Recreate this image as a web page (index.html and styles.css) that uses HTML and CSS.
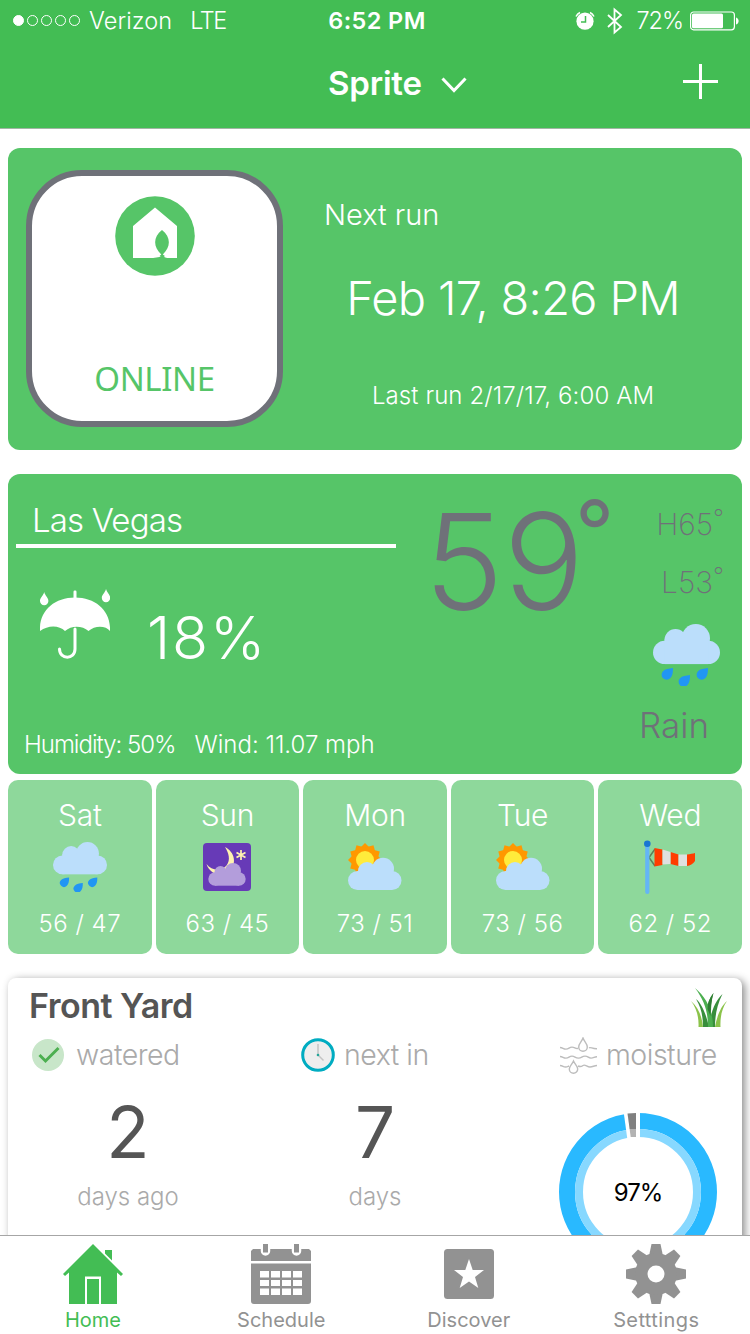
FILE: index.html
```html
<!DOCTYPE html>
<html lang="en">
<head>
    <meta charset="UTF-8">
    <meta name="viewport" content="width=device-width, initial-scale=1.0">
    <title>Sprite</title>
    <link rel="stylesheet" href="styles.css">
</head>
<body>
    <!-- Shared icons -->
    <svg class="defs" width="0" height="0">
        <symbol id="rain" viewBox="0 0 67 62">
            <g fill="#bbdefb">
                <circle cx="11.7" cy="28.4" r="11.7"/>
                <circle cx="55.3" cy="28.4" r="11.7"/>
                <circle cx="22.5" cy="16" r="11"/>
                <circle cx="42.8" cy="14.3" r="14.2"/>
                <rect x="11.7" y="15" width="43.6" height="25.1"/>
            </g>
            <g fill="#2196f3">
                <path id="drop" d="M20 44c0 5-.6 8-2.8 10.2a5 5 0 0 1-7.2-7C12 45 16 44.600 20 44z"/>
                <use href="#drop" x="17" y="7"/>
                <use href="#drop" x="35"/>
            </g>
        </symbol>
        <symbol id="partly" viewBox="0 0 54 48">
            <g fill="#ff9800">
                <path id="rays" d="M17 0l17 17-17 17L0 17z"/>
                <use href="#rays" transform="rotate(30 17 17)"/>
                <use href="#rays" transform="rotate(60 17 17)"/>
            </g>
            <circle cx="17" cy="17" r="9" fill="#ffeb3b"/>
            <g fill="#bbdefb">
                <circle cx="9.500" cy="37.500" r="9.500"/>
                <circle cx="44" cy="37.500" r="9.500"/>
                <circle cx="19" cy="28" r="9"/>
                <circle cx="35" cy="25.700" r="11"/>
                <rect x="9.500" y="28" width="34.500" height="19"/>
            </g>
        </symbol>
    </svg>

    <header class="header">
        <div class="status-bar">
            <div class="carrier">
                <span class="signal"><i class="on"></i><i></i><i></i><i></i><i></i></span>
                <span class="carrier-name">Verizon</span>
                <span class="network">LTE</span>
            </div>
            <div class="time">6:52 PM</div>
            <div class="device">
                <svg class="alarm" width="20" height="20" viewBox="0 0 20 20">
                    <circle cx="10" cy="10.200" r="8.600" fill="#fff"/>
                    <path d="M1 5.500A9 9 0 0 1 5 1.500M19 5.500A9 9 0 0 0 15 1.500" fill="none" stroke="#fff" stroke-width="1.500"/>
                    <path d="M10.500 5v6H6" fill="none" stroke="#43bd54" stroke-width="1.500"/>
                </svg>
                <svg class="bluetooth" width="16" height="28" viewBox="0 0 16 28">
                    <path d="M1 8l13 12-6.500 5.500V2.500L14 8 1 20" fill="none" stroke="#fff" stroke-width="1.800"/>
                </svg>
                <span class="percent">72%</span>
                <svg width="49" height="20" viewBox="0 0 49 20">
                    <rect x=".6" y="1" width="43.800" height="17.800" rx="3" fill="none" stroke="#fff" stroke-width="1.200"/>
                    <rect x="2" y="2.500" width="31" height="14.800" rx="1.500" fill="#fff"/>
                    <path d="M46 6.500c3.500 1 3.500 6 0 7z" fill="#fff"/>
                </svg>
            </div>
        </div>
        <div class="nav">
            <h1 class="title">Sprite</h1>
            <svg class="chevron" width="26" height="16" viewBox="0 0 26 16">
                <path d="M1.500 1.500L13 13.500 24.500 1.500" fill="none" stroke="#fff" stroke-width="3"/>
            </svg>
            <svg class="plus" width="35" height="35" viewBox="0 0 35 35">
                <path d="M17.500 0v35M0 17.500h35" stroke="#fff" stroke-width="3"/>
            </svg>
        </div>
    </header>

    <main class="content">
        <!-- Controller status -->
        <section class="card status-card">
            <div class="tile">
                <svg width="80" height="80" viewBox="0 0 80 80">
                    <circle cx="40" cy="40" r="39.800" fill="#56c568"/>
                    <path fill="#fff" d="M40 11.500L62 30v32H52.500c-2-.3-3.500-1-5-2-4 1.500-8 2-13 2H18V30z"/>
                    <path fill="#56c568" d="M47 34c9 7 9 17 .8 24.500l2.200 1.500-2.500 2-3-2 1.800-1.500C38 51 38 41 47 34z"/>
                </svg>
                <span class="tile-label">ONLINE</span>
            </div>
            <div class="run">
                <div class="next-label">Next run</div>
                <div class="next-time">Feb 17, 8:26 PM</div>
                <div class="last-run">Last run 2/17/17, 6:00 AM</div>
            </div>
        </section>

        <!-- Current weather -->
        <section class="card weather-card">
            <div class="weather-left">
                <div class="city">Las Vegas</div>
                <div class="chance">
                    <svg width="70" height="71" viewBox="0 0 70 71">
                        <g fill="#fff">
                            <path d="M0 42C-1 22 14 8.500 35 8.500S71 22 70 42c-4-5.500-15-6-21.500 0-6-5.500-17-6-23.500 0-6-6-17-6-25 0z"/>
                            <rect x="33.500" y="1.500" width="3" height="9" rx="1.200"/>
                            <path d="M4.200 3c1 4 4.200 5.500 4.200 9a4.200 4.200 0 0 1-8.400 0C0 8.500 3.200 7 4.200 3zM66 0c1 4 4.200 5.500 4.200 9a4.200 4.200 0 0 1-8.400 0C61.800 5.500 65 4 66 0z"/>
                        </g>
                        <path d="M35 40v20c0 11-15.500 11-15.500 0" fill="none" stroke="#fff" stroke-width="3" stroke-linecap="round"/>
                    </svg>
                    <span class="chance-value">18%</span>
                </div>
                <div class="details"><span class="humidity">Humidity: 50%</span><span>Wind: 11.07 mph</span></div>
            </div>
            <div class="temp"><span class="temp-value">59</span><span class="temp-degree">°</span></div>
            <div class="weather-right">
                <div class="high">H65<sup>°</sup></div>
                <div class="low">L53<sup>°</sup></div>
                <svg class="now-icon" width="67" height="62"><use href="#rain"/></svg>
                <div class="condition">Rain</div>
            </div>
        </section>

        <!-- Forecast -->
        <section class="forecast">
            <div class="day">
                <div class="day-name">Sat</div>
                <svg width="54" height="50"><use href="#rain"/></svg>
                <div class="day-temp">56 / 47</div>
            </div>
            <div class="day">
                <div class="day-name">Sun</div>
                <svg width="48" height="48" viewBox="0 0 48 48">
                    <rect width="48" height="48" rx="4" fill="#673ab7"/>
                    <path fill="#fff3b0" d="M22 4c10 5 12 17 4.500 24C19 34 7 32 3.500 21c5 7 15 7.500 20 1.500 4.500-5.500 2-13-1.500-18.500z"/>
                    <path fill="none" stroke="#fff3b0" stroke-width="1.700" d="M38 7v10M33.500 9.500l9 5M42.500 9.500l-9 5"/>
                    <g fill="#b39ddb">
                        <circle cx="12" cy="36" r="6.700"/>
                        <circle cx="36" cy="36" r="6.700"/>
                        <circle cx="17.500" cy="29" r="6"/>
                        <circle cx="30" cy="28" r="8"/>
                        <rect x="12" y="29" width="24" height="13.700"/>
                    </g>
                </svg>
                <div class="day-temp">63 / 45</div>
            </div>
            <div class="day">
                <div class="day-name">Mon</div>
                <svg width="54" height="48"><use href="#partly"/></svg>
                <div class="day-temp">73 / 51</div>
            </div>
            <div class="day">
                <div class="day-name">Tue</div>
                <svg width="54" height="48"><use href="#partly"/></svg>
                <div class="day-temp">73 / 56</div>
            </div>
            <div class="day">
                <div class="day-name">Wed</div>
                <svg width="52" height="54" viewBox="0 0 52 54">
                    <path d="M11 9l-6 8.500 6 8.500" fill="none" stroke="#5d7f5a" stroke-width="1.500"/>
                    <rect x="1.200" y="4" width="4.200" height="50" rx="2" fill="#64b5f6"/>
                    <circle cx="3.300" cy="3.700" r="3.300" fill="#1976d2"/>
                    <path fill="#ff3d00" d="M10.500 8l8 1.500V25l-8 1.500zM26.500 12l8 2.500V26l-8-2zM43 14.500c3-.2 6-1 8-1.500v8c-2 3-5 4.500-8 5z"/>
                    <path fill="#e0e0e0" d="M18.500 9.500l8 2.500v12l-8 .5zM34.500 14.500H43V26h-8.500z"/>
                </svg>
                <div class="day-temp">62 / 52</div>
            </div>
        </section>

        <!-- Zone -->
        <section class="zone">
            <div class="zone-head">
                <h2 class="zone-name">Front Yard</h2>
                <svg width="36" height="40" viewBox="0 0 36 40">
                    <path fill="#8bc34a" d="M0 13c7 6 11 15 12 26H7.500C8 29 5.500 20 0 13zM36 13c-6 5-10 15-12 26h5.500C29 29 31 20 36 13z"/>
                    <path fill="#388e3c" d="M5 11c6 5 10 15 13 28h-6C12 28 10 19 5 11zM31.500 6C25 12 20 22 18 39h6c0-12 2-22 7.500-33zM22.500 5C17 12 15 19 17 27l3 2c0-8 0-15 2.500-24z"/>
                    <path fill="#4caf50" d="M4 0c11 9 18 22 18 39h-5C17 23 13 12 4 0z"/>
                    <path fill="#2e7d32" d="M22.500 5c-4 5-6 10-6 16l3 7c0-8 .5-15 3-23z"/>
                </svg>
            </div>
            <div class="stats">
                <div class="stat watered">
                    <div class="stat-label">
                        <svg width="32" height="32" viewBox="0 0 32 32">
                            <circle cx="16" cy="16" r="16" fill="#c8e6c9"/>
                            <path d="M7.500 16l6 6L26.500 9" fill="none" stroke="#4caf50" stroke-width="3"/>
                        </svg>
                        <span>watered</span>
                    </div>
                    <div class="stat-value">2</div>
                    <div class="stat-unit">days ago</div>
                </div>
                <div class="stat next">
                    <div class="stat-label">
                        <svg width="34" height="34" viewBox="0 0 34 34">
                            <circle cx="17" cy="17" r="15.300" fill="#eee" stroke="#00acc1" stroke-width="3"/>
                            <path d="M17 6v11l5.500 5.500" fill="none" stroke="#c4c4c4" stroke-width="1.500"/>
                            <circle cx="17" cy="17" r="1.300" fill="#26a69a"/>
                        </svg>
                        <span>next in</span>
                    </div>
                    <div class="stat-value">7</div>
                    <div class="stat-unit">days</div>
                </div>
                <div class="stat moisture">
                    <div class="stat-label">
                        <svg width="37" height="37" viewBox="0 0 37 37" fill="none" stroke="#bdbdbd" stroke-width="1.400">
                            <path d="M23 1c1.500 4 4.300 5.500 4.300 9a4.300 4.300 0 0 1-8.600 0C18.700 6.500 21.500 5 23 1z"/>
                            <path d="M13.500 24c1.500 3.500 4.200 5 4.200 8a4.200 4.200 0 0 1-8.400 0c0-3 2.700-4.500 4.200-8z"/>
                            <path d="M0 10.500c3 0 3 1.600 6 1.600s3-2 6-2 3 1.800 6 1.300M29 10.800c2-1 3 1.200 8 1M0 19.500c3 0 3 1.600 6 1.600s3-2 6-2 3 2 6.500 2 3-2 6.500-2 3 2 6 2 3-1.300 6-1.300M0 28.500c3 0 3 1.500 5.500 1.500s2-.6 3.500-1M18 29c2 1 3 1 5-.5s4 1.500 7 1.500 4-1.500 7-1.500"/>
                        </svg>
                        <span>moisture</span>
                    </div>
                    <svg class="donut" width="158" height="158" viewBox="0 0 158 158">
                        <circle cx="79" cy="79" r="71" fill="none" stroke="#29b9ff" stroke-width="16"/>
                        <circle cx="79" cy="79" r="59" fill="none" stroke="#87d8ff" stroke-width="8"/>
                        <path fill="#fff" d="M64.800 0H81v25H68.200z"/>
                        <path fill="#808080" d="M68.500.6Q73 0 77 0v16h-6.400z"/>
                        <path fill="#b3b3b3" d="M70.600 16H77v8h-5.300z"/>
                        <text class="donut-label" x="79" y="88" text-anchor="middle">97%</text>
                    </svg>
                </div>
            </div>
        </section>
    </main>

    <nav class="tabs">
        <a class="tab active">
            <svg width="60" height="60" viewBox="0 0 60 60" fill="currentColor">
                <path d="M30 0l30 30-2 2-4-3.500V60H38V32.500H22V60H6V28.500L2 32l-2-2z"/>
                <path d="M24 35h12v25H24zM42 6h7v10.500l-7-7z"/>
            </svg>
            <span>Home</span>
        </a>
        <a class="tab">
            <svg width="60" height="60" viewBox="0 0 60 60">
                <path fill="currentColor" d="M2 5h56l2 2v10H0V7zM0 19.500h60V57a3 3 0 0 1-3 3H3a3 3 0 0 1-3-3z"/>
                <path d="M14.500 2v5M45.500 2v5" stroke="#fff" stroke-width="9.500" stroke-linecap="round"/>
                <path fill="#fff" d="M9 0h11v4H9zM40 0h11v4H40z"/>
                <path d="M14.500 0v8.500M45.500 0v8.500" stroke="currentColor" stroke-width="5"/>
                <path fill="#fff" d="M9 27h9v6.500H9zM20 27h9v6.500h-9zM31 27h9v6.500h-9zM42 27h9v6.500h-9zM9 36h9v6H9zM20 36h9v6h-9zM31 36h9v6h-9zM42 36h9v6h-9zM9 44.500h9V51H9zM20 44.500h9V51h-9zM31 44.500h9V51h-9zM42 44.500h9V51h-9z"/>
            </svg>
            <span>Schedule</span>
        </a>
        <a class="tab">
            <svg width="60" height="60" viewBox="0 0 60 60">
                <rect x="5" y="5" width="50" height="50" rx="3.500" fill="currentColor"/>
                <path fill="#fff" d="M30 15l3.700 11H45l-9 7 3.300 11L30 37.500 20.700 44 24 33l-9-7h11.300z"/>
            </svg>
            <span>Discover</span>
        </a>
        <a class="tab settings">
            <svg width="60" height="60" viewBox="-30 -30 60 60">
                <g fill="currentColor">
                    <path id="tooth" d="M-7-18L-4.500-30h9L7-18v36L4.500 30h-9L-7 18z"/>
                    <use href="#tooth" transform="rotate(45)"/>
                    <use href="#tooth" transform="rotate(90)"/>
                    <use href="#tooth" transform="rotate(135)"/>
                    <circle r="21"/>
                </g>
                <circle r="8.500" fill="#fff"/>
            </svg>
            <span>Setttings</span>
        </a>
    </nav>
</body>
</html>
```

FILE: styles.css
```css
* {
    box-sizing: border-box;
}
body {
    margin: 0;
    height: 1334px;
    display: flex;
    flex-direction: column;
    overflow: hidden;
    background: #fff;
    color: #fff;
    font-family: Inter, Roboto, "Liberation Sans", sans-serif;
    font-weight: 300;
    white-space: nowrap;
}
svg {
    display: block;
    flex-shrink: 0;
}
.defs {
    position: absolute;
}

/* Header */
.header {
    height: 129px;
    background: #43bd54;
    border-bottom: 1px solid #a3b5a5;
    flex-shrink: 0;
}
.status-bar {
    height: 41px;
    padding: 0 11px 0 13px;
    display: grid;
    grid-template-columns: 1fr auto 1fr;
    align-items: center;
    font-size: 23.5px;
    line-height: 41px;
}
.carrier, .device {
    display: flex;
    align-items: center;
}
.device {
    justify-content: flex-end;
}
.signal {
    display: flex;
    gap: 3px;
}
.signal i {
    width: 11px;
    height: 11px;
    border: 1px solid #fff;
    border-radius: 50%;
}
.signal .on {
    background: #fff;
}
.carrier-name {
    margin-left: 9px;
    letter-spacing: 0.1px;
}
.network {
    margin-left: 18px;
    letter-spacing: -1.5px;
}
.time {
    padding-left: 2px;
    font-weight: 600;
    letter-spacing: 0.4px;
}
.bluetooth {
    margin: 0 13px 0 12px;
}
.percent {
    margin-right: 7px;
    letter-spacing: -1px;
}
.nav {
    height: 87px;
    padding: 0 32px 0 328px;
    display: flex;
    align-items: center;
}
.title {
    margin: 0 0 3px;
    font-size: 33px;
    font-weight: 600;
    line-height: 84px;
    letter-spacing: -0.2px;
}
.chevron {
    margin-left: 19px;
}
.plus {
    margin: 0 0 6px auto;
}

/* Cards */
.content {
    flex: 1;
    min-height: 0;
    overflow: hidden;
    padding: 19px 8px 0;
}
.card {
    display: flex;
    background: #56c568;
    border-radius: 12px;
}
.status-card {
    height: 302px;
    padding: 22px 10px 0 18px;
}
.tile {
    width: 257px;
    height: 257px;
    padding-top: 20px;
    display: flex;
    flex-direction: column;
    align-items: center;
    justify-content: space-between;
    background: #fff;
    border: 6px solid #6f7179;
    border-radius: 56px;
}
.tile-label {
    font-family: "Noto Sans", sans-serif;
    font-size: 33px;
    font-weight: 400;
    line-height: 40px;
    letter-spacing: -0.4px;
    margin-bottom: 22px;
    color: #56c568;
}
.run {
    flex: 1;
    margin-left: 11px;
    text-align: center;
}
.next-label {
    padding-left: 30px;
    font-size: 29px;
    line-height: 90px;
    text-align: left;
}
.next-time {
    font-size: 47px;
    line-height: 75px;
    letter-spacing: -0.7px;
}
.last-run {
    font-size: 24px;
    line-height: 122px;
    letter-spacing: 0.1px;
}
.weather-card {
    height: 300px;
    margin-top: 24px;
    padding-left: 8px;
}
.weather-left {
    width: 380px;
}
.city {
    height: 74px;
    padding: 6px 0 0 16px;
    border-bottom: 4px solid #fff;
    font-size: 33px;
    line-height: 81px;
    letter-spacing: -0.85px;
}
.chance {
    display: flex;
    padding: 41px 0 0 24px;
}
.chance-value {
    margin-left: 37px;
    font-size: 59px;
    line-height: 98px;
    letter-spacing: 1.8px;
}
.details {
    display: flex;
    gap: 19px;
    padding: 32px 0 0 8px;
    font-size: 24px;
    line-height: 52px;
}
.humidity {
    letter-spacing: -1px;
}
.temp {
    width: 224px;
    display: flex;
    padding-left: 28px;
    color: #6f7179;
}
.temp-value {
    font-size: 134px;
    line-height: 174px;
}
.temp-degree {
    margin-left: -9px;
    font-size: 86px;
    font-weight: 400;
    line-height: 114px;
}
.weather-right {
    width: 104px;
    color: #6f7179;
    text-align: right;
}
.high, .low {
    font-size: 30px;
    font-weight: 200;
    line-height: 58px;
}
.high {
    padding-top: 21px;
}
.high sup, .low sup {
    font-size: 24px;
    line-height: 0;
    vertical-align: 8px;
}
.now-icon {
    margin: 13px 0 0 33px;
}
.condition {
    padding-right: 15px;
    font-size: 35px;
    line-height: 79px;
}

/* Forecast */
.forecast {
    display: grid;
    grid-template-columns: repeat(5, 1fr);
    gap: 4px;
    margin-top: 6px;
}
.day {
    height: 174px;
    padding-top: 8px;
    display: flex;
    flex-direction: column;
    align-items: center;
    justify-content: space-between;
    background: #8ed89b;
    border-radius: 10px;
}
.day svg {
    margin: -5px 0 -4px;
}
.day-name {
    font-size: 30px;
    line-height: 54px;
    letter-spacing: -0.3px;
}
.day-temp {
    font-size: 24px;
    line-height: 61px;
    letter-spacing: 0.5px;
}

/* Zone */
.zone {
    height: 320px;
    margin-top: 24px;
    background: #fff;
    border-radius: 8px;
    box-shadow: 3px 2px 8px rgba(0, 0, 0, 0.45);
    color: #555;
}
.zone-head {
    height: 56px;
    padding: 0 15px 0 21px;
    display: flex;
    align-items: center;
    justify-content: space-between;
}
.zone-head svg {
    margin-top: 3px;
}
.zone-name {
    margin: 0;
    font-size: 34px;
    font-weight: 600;
    line-height: 56px;
    letter-spacing: -0.5px;
}
.stats {
    display: grid;
    grid-template-columns: 240px 254px 240px;
}
.stat {
    text-align: center;
}
.stat-label {
    height: 42px;
    display: flex;
    align-items: center;
    gap: 12px;
    font-size: 28.5px;
    line-height: 42px;
    letter-spacing: -0.5px;
    color: #aaa;
}
.watered .stat-label {
    padding-left: 24px;
}
.next .stat-label {
    padding-left: 53px;
    gap: 9px;
}
.moisture .stat-label {
    padding-left: 58px;
    gap: 9px;
}
.stat-value {
    font-size: 71px;
    font-weight: 400;
    line-height: 112px;
}
.stat-unit {
    font-size: 24px;
    line-height: 18px;
    color: #aaa;
}
.donut {
    margin: 37px 0 0 57px;
}
.donut-label {
    font-size: 24px;
    font-weight: 400;
    letter-spacing: -1px;
    fill: #000;
}

/* Tab bar */
.tabs {
    height: 99px;
    flex-shrink: 0;
    display: grid;
    grid-template-columns: repeat(4, 1fr);
    background: #fff;
    border-top: 1px solid #a6a6a6;
    color: #929292;
}
.tab {
    display: flex;
    flex-direction: column;
    align-items: center;
    padding-top: 8px;
    font-size: 20px;
    font-weight: 400;
    line-height: 32px;
}
.tab.active {
    padding-right: 1.5px;
    color: #43bd54;
}
.settings {
    letter-spacing: 0.4px;
}
```
